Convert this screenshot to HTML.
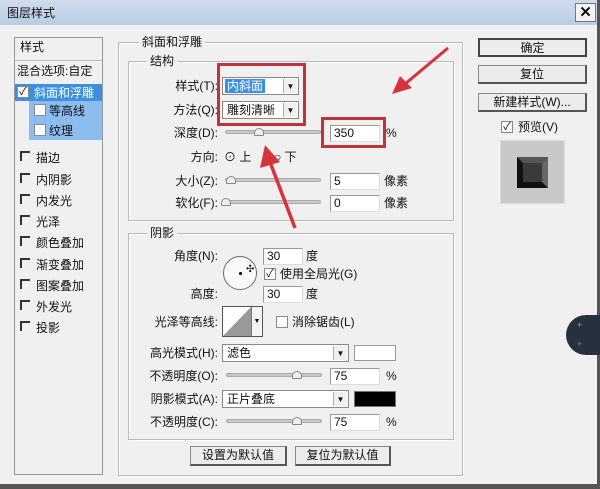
<!DOCTYPE html>
<html><head><meta charset="utf-8">
<style>
*{box-sizing:border-box;margin:0;padding:0}
body{width:600px;height:489px;overflow:hidden;background:#f0f0f0;font-family:"Liberation Sans","Noto Sans CJK SC",sans-serif;font-size:12px;color:#111;position:relative}
.a{position:absolute;white-space:nowrap;line-height:14px}
.r{text-align:right}
.grp{position:absolute;border:1px solid #b8b8b8;box-shadow:1px 1px 0 #fff inset,1px 1px 0 #fff}
.gt{position:absolute;background:#f0f0f0;padding:0 3px;line-height:14px;top:-8px}
.inp{position:absolute;background:#fff;border:1px solid #999;border-right-color:#ddd;border-bottom-color:#ddd;padding-left:3px;line-height:15px}
.dd{position:absolute;background:#fff;border:1px solid #888;padding-left:4px;line-height:16px}
.dd .ar{position:absolute;right:1px;top:1px;bottom:1px;width:14px;background:#f0f0f0;border-left:1px solid #aaa;font-size:8px;text-align:center;line-height:15px}
.sl{position:absolute;height:4px;background:#c8c8c8;border:1px solid #aaa;border-radius:2px}
.th{position:absolute;width:10px;height:8px;border:1px solid #888;background:#eee;border-radius:5px 5px 1px 1px}
.cb{position:absolute;width:10px;height:10px;border-top:2px solid #333;border-left:2px solid #333}
.ck{position:absolute;width:12px;height:12px;background:#fff;border:1px solid #888;font-size:11px;line-height:10px;text-align:center}
.btn{position:absolute;background:#ececec;border:1px solid #888;border-right:2px solid #555;border-bottom:2px solid #555;text-align:center;line-height:16px}
.li{position:absolute;left:36px;line-height:14px}
</style></head><body>
<div class="a" style="left:0;top:0;width:600px;height:25px;background:linear-gradient(#cfdcec,#b9cce4);"></div>
<div class="a" style="left:7px;top:6px;">图层样式</div>
<div class="a" style="left:575px;top:3px;width:21px;height:19px;border:1px solid #777;background:#f4f4f4;font-weight:bold;font-size:15px;text-align:center;line-height:17px">✕</div>
<div class="a" style="left:597px;top:0;width:3px;height:489px;background:#555"></div>
<div class="a" style="left:0;top:484px;width:600px;height:5px;background:#555"></div>

<!-- left list -->
<div class="a" style="left:14px;top:37px;width:89px;height:438px;background:#f0f0f0;border:1px solid #999"></div>
<div class="a" style="left:20px;top:40px;">样式</div>
<div class="a" style="left:15px;top:60px;width:87px;height:1px;background:#bbb"></div>
<div class="a" style="left:17px;top:64px;">混合选项:自定</div>
<div class="a" style="left:15px;top:84px;width:87px;height:17px;background:#3e8fe0"></div>
<div class="a" style="left:29px;top:101px;width:73px;height:39px;background:#8dbcef"></div>
<div class="ck" style="left:17px;top:86px;">✓</div>
<div class="a" style="left:34px;top:86px;color:#fff">斜面和浮雕</div>
<div class="ck" style="left:34px;top:104px;"></div>
<div class="a" style="left:49px;top:104px;">等高线</div>
<div class="ck" style="left:34px;top:124px;"></div>
<div class="a" style="left:49px;top:124px;">纹理</div>
<div class="cb" style="left:20px;top:151px"></div><div class="li" style="top:151px">描边</div>
<div class="cb" style="left:20px;top:173px"></div><div class="li" style="top:173px">内阴影</div>
<div class="cb" style="left:20px;top:194px"></div><div class="li" style="top:194px">内发光</div>
<div class="cb" style="left:20px;top:215px"></div><div class="li" style="top:215px">光泽</div>
<div class="cb" style="left:20px;top:236px"></div><div class="li" style="top:236px">颜色叠加</div>
<div class="cb" style="left:20px;top:258px"></div><div class="li" style="top:258px">渐变叠加</div>
<div class="cb" style="left:20px;top:279px"></div><div class="li" style="top:279px">图案叠加</div>
<div class="cb" style="left:20px;top:300px"></div><div class="li" style="top:300px">外发光</div>
<div class="cb" style="left:20px;top:321px"></div><div class="li" style="top:321px">投影</div>

<!-- main group -->
<div class="grp" style="left:118px;top:42px;width:345px;height:434px"><div class="gt" style="left:20px">斜面和浮雕</div></div>
<div class="grp" style="left:128px;top:61px;width:326px;height:160px"><div class="gt" style="left:18px">结构</div></div>
<div class="grp" style="left:128px;top:233px;width:326px;height:207px"><div class="gt" style="left:18px">阴影</div></div>

<div class="a r" style="left:150px;width:68px;top:79px">样式(T):</div>
<div class="dd" style="left:222px;top:77px;width:77px;height:18px"><span style="background:#3a8ee6;color:#fff;padding:0 2px;margin-left:-2px">内斜面</span><div class="ar">▼</div></div>
<div class="a r" style="left:150px;width:68px;top:103px">方法(Q):</div>
<div class="dd" style="left:222px;top:101px;width:77px;height:18px">雕刻清晰<div class="ar">▼</div></div>
<div class="a r" style="left:150px;width:68px;top:126px">深度(D):</div>
<div class="sl" style="left:225px;top:130px;width:96px"></div><div class="th" style="left:254px;top:128px"></div>
<div class="inp" style="left:330px;top:125px;width:50px;height:17px">350</div>
<div class="a" style="left:386px;top:126px">%</div>
<div class="a r" style="left:150px;width:68px;top:150px">方向:</div>
<div class="a" style="left:224px;top:150px">⊙ 上</div>
<div class="a" style="left:274px;top:150px">○ 下</div>
<div class="a r" style="left:150px;width:68px;top:174px">大小(Z):</div>
<div class="sl" style="left:225px;top:178px;width:96px"></div><div class="th" style="left:226px;top:176px"></div>
<div class="inp" style="left:330px;top:173px;width:50px;height:17px">5</div>
<div class="a" style="left:384px;top:174px">像素</div>
<div class="a r" style="left:150px;width:68px;top:196px">软化(F):</div>
<div class="sl" style="left:225px;top:200px;width:96px"></div><div class="th" style="left:221px;top:198px"></div>
<div class="inp" style="left:330px;top:195px;width:50px;height:17px">0</div>
<div class="a" style="left:384px;top:196px">像素</div>

<div class="a r" style="left:150px;width:68px;top:249px">角度(N):</div>
<div class="a" style="left:223px;top:256px;width:34px;height:34px;border:1.5px solid #5a6f8a;border-radius:50%;background:#fafafa"></div>
<div class="a" style="left:239px;top:272px;width:3px;height:3px;background:#000;border-radius:50%"></div>
<div class="a" style="left:246px;top:263px;font-size:10px">✣</div>
<div class="inp" style="left:263px;top:248px;width:40px;height:17px">30</div>
<div class="a" style="left:306px;top:249px">度</div>
<div class="ck" style="left:264px;top:268px">✓</div>
<div class="a" style="left:280px;top:267px">使用全局光(G)</div>
<div class="a r" style="left:150px;width:68px;top:287px">高度:</div>
<div class="inp" style="left:263px;top:286px;width:40px;height:17px">30</div>
<div class="a" style="left:306px;top:287px">度</div>
<div class="a r" style="left:130px;width:88px;top:315px">光泽等高线:</div>
<div class="a" style="left:222px;top:306px;width:41px;height:31px;border:1px solid #555;background:#fff">
<svg width="28" height="29" style="position:absolute;left:0;top:0"><polygon points="0,29 28,0 28,29" fill="#999"/></svg>
<div style="position:absolute;right:0;top:0;width:11px;height:29px;border-left:1px solid #777;background:#f4f4f4;font-size:7px;text-align:center;line-height:29px">▼</div></div>
<div class="ck" style="left:276px;top:316px"></div>
<div class="a" style="left:292px;top:315px">消除锯齿(L)</div>
<div class="a r" style="left:130px;width:88px;top:346px">高光模式(H):</div>
<div class="dd" style="left:222px;top:344px;width:127px;height:18px">滤色<div class="ar">▼</div></div>
<div class="a" style="left:354px;top:345px;width:42px;height:16px;background:#fff;border:1px solid #999"></div>
<div class="a r" style="left:130px;width:88px;top:369px">不透明度(O):</div>
<div class="sl" style="left:226px;top:373px;width:96px"></div><div class="th" style="left:292px;top:371px"></div>
<div class="inp" style="left:330px;top:368px;width:50px;height:17px">75</div>
<div class="a" style="left:386px;top:369px">%</div>
<div class="a r" style="left:130px;width:88px;top:392px">阴影模式(A):</div>
<div class="dd" style="left:222px;top:390px;width:127px;height:18px">正片叠底<div class="ar">▼</div></div>
<div class="a" style="left:354px;top:391px;width:42px;height:16px;background:#000;border:1px solid #777"></div>
<div class="a r" style="left:130px;width:88px;top:415px">不透明度(C):</div>
<div class="sl" style="left:226px;top:419px;width:96px"></div><div class="th" style="left:292px;top:417px"></div>
<div class="inp" style="left:330px;top:414px;width:50px;height:17px">75</div>
<div class="a" style="left:386px;top:415px">%</div>

<div class="btn" style="left:190px;top:446px;width:97px;height:20px">设置为默认值</div>
<div class="btn" style="left:295px;top:446px;width:96px;height:20px">复位为默认值</div>

<!-- right -->
<div class="btn" style="left:478px;top:38px;width:109px;height:19px;border:2px solid #444">确定</div>
<div class="btn" style="left:478px;top:65px;width:109px;height:19px">复位</div>
<div class="btn" style="left:478px;top:93px;width:109px;height:19px">新建样式(W)...</div>
<div class="ck" style="left:501px;top:121px">✓</div>
<div class="a" style="left:518px;top:120px">预览(V)</div>
<div class="a" style="left:500px;top:140px;width:65px;height:64px;background:#c8c8c8;border:1px solid #ddd"></div>
<svg class="a" style="left:517px;top:157px" width="31" height="31"><rect width="31" height="31" fill="#111"/><polygon points="0,0 31,0 25,6 6,6" fill="#555"/><polygon points="31,0 31,31 25,25 25,6" fill="#666"/><rect x="6" y="6" width="19" height="19" fill="#3a3a3a"/></svg>

<!-- scroll widget -->
<div class="a" style="left:566px;top:315px;width:34px;height:40px;background:#26303f;border-radius:20px 0 0 20px"></div>
<div class="a" style="left:577px;top:318px;color:#6aa8e0;font-size:9px">+</div>
<div class="a" style="left:577px;top:337px;color:#4a9a6a;font-size:9px">+</div>

<!-- red overlays -->
<svg class="a" style="left:0;top:0" width="600" height="489">
<rect x="218.5" y="64.5" width="86" height="60" fill="none" stroke="#c0333d" stroke-width="3"/>
<rect x="322.5" y="118.5" width="62" height="28" fill="none" stroke="#c0333d" stroke-width="3"/>
<line x1="448" y1="48" x2="405" y2="84" stroke="#d8323a" stroke-width="3"/>
<polygon points="392,94 400,76 412,88" fill="#d8323a"/>
<line x1="295" y1="228" x2="270" y2="162" stroke="#d8323a" stroke-width="3.5"/>
<polygon points="265,145 260,168 280,162" fill="#d8323a"/>
</svg>
</body></html>
